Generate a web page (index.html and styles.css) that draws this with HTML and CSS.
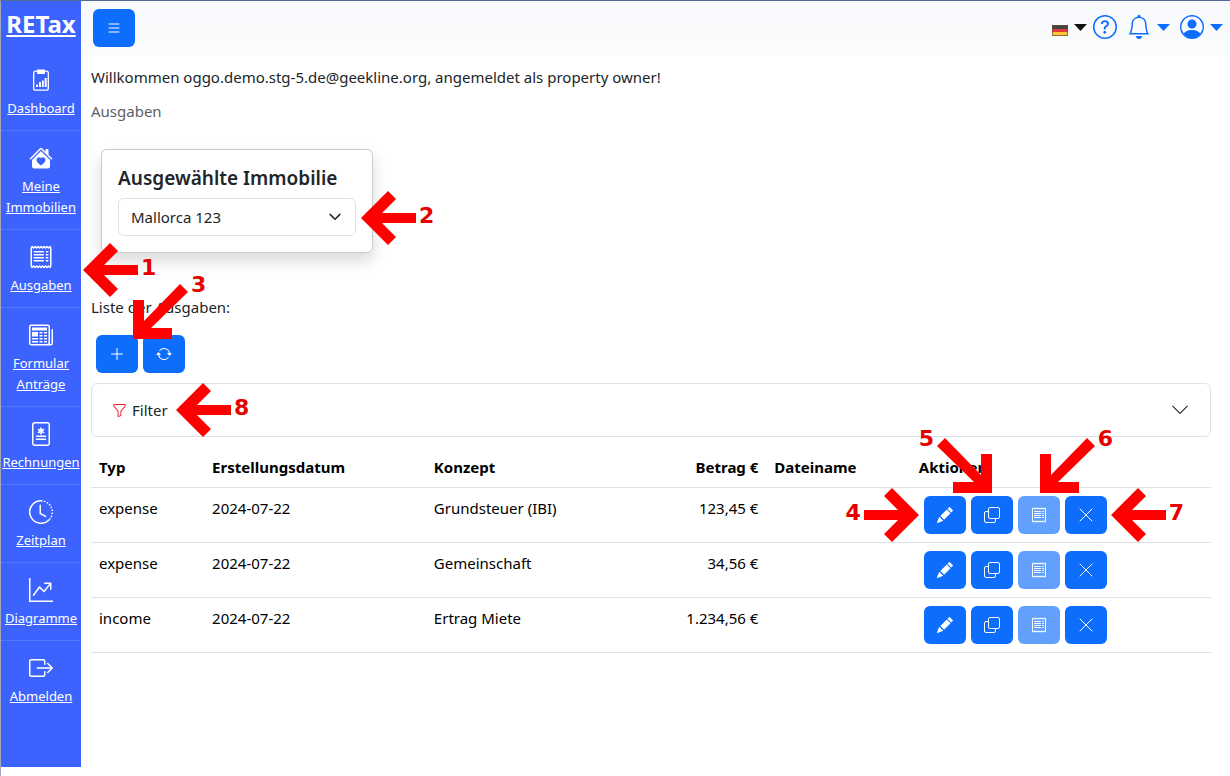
FILE: index.html
```html
<!DOCTYPE html>
<html lang="de">
<head>
<meta charset="utf-8">
<title>RETax – Ausgaben</title>
<meta name="viewport" content="width=device-width, initial-scale=1">
<link rel="stylesheet" href="styles.css">
</head>
<body>
<svg class="sprite" aria-hidden="true">
  <symbol id="i-list" viewBox="0 0 16 16"><path fill-rule="evenodd" d="M2.5 12a.5.5 0 0 1 .5-.5h10a.5.5 0 0 1 0 1H3a.5.5 0 0 1-.5-.5m0-4a.5.5 0 0 1 .5-.5h10a.5.5 0 0 1 0 1H3a.5.5 0 0 1-.5-.5m0-4a.5.5 0 0 1 .5-.5h10a.5.5 0 0 1 0 1H3a.5.5 0 0 1-.5-.5"/></symbol>
  <symbol id="i-clip" viewBox="0 0 24 24"><rect x="4.700" y="3.200" width="14.600" height="19" rx="2" fill="none" stroke="currentColor" stroke-width="1.300"/><path d="M9 1.500h6a1 1 0 0 1 1 1V5a1 1 0 0 1-1 1H9a1 1 0 0 1-1-1V2.500a1 1 0 0 1 1-1zM7 16.500h2V19H7zM10 14h2v5h-2zM13 12.500h1.800V19H13zM15.700 10h2v9h-2z"/></symbol>
  <symbol id="i-house" viewBox="0 0 16 16"><path d="M8.707 1.500a1 1 0 0 0-1.414 0L.646 8.146a.5.5 0 0 0 .708.708L8 2.207l6.646 6.647a.5.5 0 0 0 .708-.708L13 5.793V2.500a.5.5 0 0 0-.5-.5h-1a.5.5 0 0 0-.5.5v1.293z"/><path fill-rule="evenodd" d="m8 3.293 6 6V13.500a1.500 1.500 0 0 1-1.500 1.500h-9A1.500 1.500 0 0 1 2 13.500V9.293zM8 7.982C9.664 6.309 13.825 9.236 8 13 2.175 9.236 6.336 6.310 8 7.982"/></symbol>
  <symbol id="i-receipt" viewBox="0 0 16 16"><path d="M1.920.506a.5.5 0 0 1 .434.140L3 1.293l.646-.647a.5.5 0 0 1 .708 0L5 1.293l.646-.647a.5.5 0 0 1 .708 0L7 1.293l.646-.647a.5.5 0 0 1 .708 0L9 1.293l.646-.647a.5.5 0 0 1 .708 0l.646.647.646-.647a.5.5 0 0 1 .708 0l.646.647.646-.647a.5.5 0 0 1 .801.130l.5 1A.5.5 0 0 1 15 2v12a.5.5 0 0 1-.053.224l-.5 1a.5.5 0 0 1-.8.130L13 14.707l-.646.647a.5.5 0 0 1-.708 0L11 14.707l-.646.647a.5.5 0 0 1-.708 0L9 14.707l-.646.647a.5.5 0 0 1-.708 0L7 14.707l-.646.647a.5.5 0 0 1-.708 0L5 14.707l-.646.647a.5.5 0 0 1-.708 0L3 14.707l-.646.647a.5.5 0 0 1-.801-.130l-.5-1A.5.5 0 0 1 1 14V2a.5.5 0 0 1 .053-.224l.5-1a.5.5 0 0 1 .367-.270m.217 1.338L2 2.118v11.764l.137.274.509-.510a.5.5 0 0 1 .708 0l.646.647.646-.647a.5.5 0 0 1 .708 0l.646.647.646-.647a.5.5 0 0 1 .708 0l.646.647.646-.647a.5.5 0 0 1 .708 0l.646.647.646-.647a.5.5 0 0 1 .708 0l.646.647.646-.647a.5.5 0 0 1 .708 0l.509.509.137-.274V2.118l-.137-.274-.510.510a.5.5 0 0 1-.707 0L12 1.707l-.646.647a.5.5 0 0 1-.708 0L10 1.707l-.646.647a.5.5 0 0 1-.708 0L8 1.707l-.646.647a.5.5 0 0 1-.708 0L6 1.707l-.646.647a.5.5 0 0 1-.708 0L4 1.707l-.646.647a.5.5 0 0 1-.708 0z"/><path d="M3 4.500a.5.5 0 0 1 .5-.5h6a.5.5 0 1 1 0 1h-6a.5.5 0 0 1-.5-.5m0 2a.5.5 0 0 1 .5-.5h6a.5.5 0 1 1 0 1h-6a.5.5 0 0 1-.5-.5m0 2a.5.5 0 0 1 .5-.5h6a.5.5 0 1 1 0 1h-6a.5.5 0 0 1-.5-.5m0 2a.5.5 0 0 1 .5-.5h6a.5.5 0 0 1 0 1h-6a.5.5 0 0 1-.5-.5m8-6a.5.5 0 0 1 .5-.5h1a.5.5 0 0 1 0 1h-1a.5.5 0 0 1-.5-.5m0 2a.5.5 0 0 1 .5-.5h1a.5.5 0 0 1 0 1h-1a.5.5 0 0 1-.5-.5m0 2a.5.5 0 0 1 .5-.5h1a.5.5 0 0 1 0 1h-1a.5.5 0 0 1-.5-.5m0 2a.5.5 0 0 1 .5-.5h1a.5.5 0 0 1 0 1h-1a.5.5 0 0 1-.5-.5"/></symbol>
  <symbol id="i-news" viewBox="0 0 16 16"><path d="M0 2.500A1.500 1.500 0 0 1 1.500 1h11A1.500 1.500 0 0 1 14 2.500v10.528c0 .3-.05.654-.238.972h.738a.5.5 0 0 0 .5-.5v-9a.5.5 0 0 1 1 0v9a1.500 1.500 0 0 1-1.500 1.500H1.497A1.497 1.497 0 0 1 0 13.500zM12 14c.37 0 .654-.211.853-.441.092-.106.147-.279.147-.531V2.500a.5.5 0 0 0-.5-.5h-11a.5.5 0 0 0-.5.5v11c0 .278.223.5.497.5z"/><path d="M2 3h10v2H2zm0 3h4v3H2zm0 4h4v1H2zm0 2h4v1H2zm5-6h2v1H7zm3 0h2v1h-2zM7 8h2v1H7zm3 0h2v1h-2zm-3 2h2v1H7zm3 0h2v1h-2zm-3 2h2v1H7zm3 0h2v1h-2z"/></symbol>
  <symbol id="i-invoice" viewBox="0 0 16 16"><rect x="2.500" y=".5" width="11" height="15" rx="1.500" fill="none" stroke="currentColor"/><path d="M5 9.500h6M5 11.500h6M8 4v4M6.300 5l3.400 2M9.700 5 6.300 7" fill="none" stroke="currentColor" stroke-linecap="round"/></symbol>
  <symbol id="i-clock" viewBox="0 0 16 16"><path d="M8 .5a7.500 7.500 0 1 0 5.300 12.800M7.500 3.500V9l3.500 1.900" fill="none" stroke="currentColor" stroke-linecap="round"/><path d="M8 .5a7.500 7.500 0 0 1 5.300 12.800" fill="none" stroke="currentColor" stroke-dasharray="1 1"/></symbol>
  <symbol id="i-graph" viewBox="0 0 16 16"><path fill-rule="evenodd" d="M0 0h1v15h15v1H0zm10 3.500a.5.5 0 0 1 .5-.5h4a.5.5 0 0 1 .5.5v4a.5.5 0 0 1-1 0V4.900l-3.613 4.417a.5.5 0 0 1-.740.037L7.060 6.767l-3.656 5.027a.5.5 0 0 1-.808-.588l4-5.500a.5.5 0 0 1 .758-.060l2.609 2.610L13.445 4H10.500a.5.5 0 0 1-.5-.5"/></symbol>
  <symbol id="i-out" viewBox="0 0 16 16"><path fill-rule="evenodd" d="M10 12.500a.5.5 0 0 1-.5.5h-8a.5.5 0 0 1-.5-.5v-9a.5.5 0 0 1 .5-.5h8a.5.5 0 0 1 .5.5v2a.5.5 0 0 0 1 0v-2A1.500 1.500 0 0 0 9.500 2h-8A1.500 1.500 0 0 0 0 3.500v9A1.500 1.500 0 0 0 1.500 14h8a1.500 1.500 0 0 0 1.500-1.500v-2a.5.5 0 0 0-1 0z"/><path fill-rule="evenodd" d="M15.854 8.354a.5.5 0 0 0 0-.708l-3-3a.5.5 0 0 0-.708.708L14.293 7.500H5.500a.5.5 0 0 0 0 1h8.793l-2.147 2.146a.5.5 0 0 0 .708.708z"/></symbol>
  <symbol id="i-help" viewBox="0 0 16 16"><path d="M8 15A7 7 0 1 1 8 1a7 7 0 0 1 0 14m0 1A8 8 0 1 0 8 0a8 8 0 0 0 0 16"/><path d="M5.255 5.786a.237.237 0 0 0 .241.247h.825c.138 0 .248-.113.266-.250.090-.656.540-1.134 1.342-1.134.686 0 1.314.343 1.314 1.168 0 .635-.374.927-.965 1.371-.673.489-1.206 1.060-1.168 1.987l.003.217a.25.25 0 0 0 .250.246h.811a.25.25 0 0 0 .250-.250v-.105c0-.718.273-.927 1.010-1.486.609-.463 1.244-.977 1.244-2.056 0-1.511-1.276-2.241-2.673-2.241-1.267 0-2.655.590-2.750 2.286m1.557 5.763c0 .533.425.927 1.010.927.609 0 1.028-.394 1.028-.927 0-.552-.420-.940-1.029-.940-.584 0-1.009.388-1.009.940"/></symbol>
  <symbol id="i-bell" viewBox="0 0 16 16"><path d="M8 16a2 2 0 0 0 2-2H6a2 2 0 0 0 2 2M8 1.918l-.797.161A4 4 0 0 0 4 6c0 .628-.134 2.197-.459 3.742-.160.767-.376 1.566-.663 2.258h10.244c-.287-.692-.502-1.490-.663-2.258C12.134 8.197 12 6.628 12 6a4 4 0 0 0-3.203-3.920zM14.220 12c.223.447.481.801.780 1H1c.299-.199.557-.553.780-1C2.680 10.200 3 6.880 3 6c0-2.420 1.720-4.440 4.005-4.901a1 1 0 1 1 1.990 0A5 5 0 0 1 13 6c0 .880.320 4.200 1.220 6"/></symbol>
  <symbol id="i-user" viewBox="0 0 16 16"><path d="M11 6a3 3 0 1 1-6 0 3 3 0 0 1 6 0"/><path fill-rule="evenodd" d="M0 8a8 8 0 1 1 16 0A8 8 0 0 1 0 8m8-7a7 7 0 0 0-5.468 11.370C3.242 11.226 4.805 10 8 10s4.757 1.225 5.468 2.370A7 7 0 0 0 8 1"/></symbol>
  <symbol id="i-caret" viewBox="0 0 13 7"><path d="M0 0h13L6.500 7z"/></symbol>
  <symbol id="i-plus" viewBox="0 0 16 16"><path d="M8 2a.5.5 0 0 1 .5.5v5h5a.5.5 0 0 1 0 1h-5v5a.5.5 0 0 1-1 0v-5h-5a.5.5 0 0 1 0-1h5v-5A.5.5 0 0 1 8 2"/></symbol>
  <symbol id="i-repeat" viewBox="0 0 16 16"><path d="M11.534 7h3.932a.25.25 0 0 1 .192.410l-1.966 2.360a.25.25 0 0 1-.384 0l-1.966-2.360a.25.25 0 0 1 .192-.410m-11 2h3.932a.25.25 0 0 0 .192-.410L2.692 6.230a.25.25 0 0 0-.384 0L.342 8.590A.25.25 0 0 0 .534 9"/><path fill-rule="evenodd" d="M8 3c-1.552 0-2.940.707-3.857 1.818a.5.5 0 1 1-.771-.636A6.002 6.002 0 0 1 13.917 7H12.900A5 5 0 0 0 8 3M3.100 9a5.002 5.002 0 0 0 8.757 2.182.5.5 0 1 1 .771.636A6.002 6.002 0 0 1 2.083 9z"/></symbol>
  <symbol id="i-funnel" viewBox="0 0 16 16"><path d="M1.500 1.500A.5.5 0 0 1 2 1h12a.5.5 0 0 1 .5.5v2a.5.5 0 0 1-.128.334L10 8.692V13.500a.5.5 0 0 1-.342.474l-3 1A.5.5 0 0 1 6 14.500V8.692L1.628 3.834A.5.5 0 0 1 1.500 3.500zm1 .5v1.308l4.372 4.858A.5.5 0 0 1 7 8.500v5.306l2-.666V8.500a.5.5 0 0 1 .128-.334L13.500 3.308V2z"/></symbol>
  <symbol id="i-chevron" viewBox="0 0 16 16"><path fill="none" stroke="currentColor" stroke-linecap="round" stroke-linejoin="round" d="m1.500 4.500 6.500 6.500 6.500-6.500"/></symbol>
  <symbol id="i-pencil" viewBox="0 0 16 16"><path d="M12.854.146a.5.5 0 0 0-.707 0L10.500 1.793 14.207 5.500l1.647-1.646a.5.5 0 0 0 0-.708zm.646 6.061L9.793 2.500 3.293 9H3.500a.5.5 0 0 1 .5.5v.5h.5a.5.5 0 0 1 .5.5v.5h.5a.5.5 0 0 1 .5.5v.5h.5a.5.5 0 0 1 .5.5v.207zm-7.468 7.468A.5.5 0 0 1 6 13.500V13h-.5a.5.5 0 0 1-.5-.5V12h-.5a.5.5 0 0 1-.5-.5V11h-.5a.5.5 0 0 1-.5-.5V10h-.5a.5.5 0 0 1-.175-.032l-.179.178a.5.5 0 0 0-.110.168l-2 5a.5.5 0 0 0 .650.650l5-2a.5.5 0 0 0 .168-.110z"/></symbol>
  <symbol id="i-copy" viewBox="0 0 16 16"><path fill="none" stroke="currentColor" d="M6 .5h8A1.500 1.500 0 0 1 15.500 2v8a1.500 1.500 0 0 1-1.500 1.500H6A1.500 1.500 0 0 1 4.500 10V2A1.500 1.500 0 0 1 6 .5zM4.500 4.500H2A1.500 1.500 0 0 0 .5 6v8A1.500 1.500 0 0 0 2 15.500h8a1.500 1.500 0 0 0 1.500-1.500v-2.500"/></symbol>
  <symbol id="i-x" viewBox="0 0 16 16"><path fill="none" stroke="currentColor" stroke-linecap="round" d="m2 2 12 12m0-12-12 12"/></symbol>
  <symbol id="i-arrow" viewBox="0 0 55 54"><path d="M0 27 27 0l8 8-14 14h34v10H21l14 14-8 8z"/></symbol>
  <symbol id="i-diag" viewBox="0 0 55 55"><path d="M0 55V16h11v21L47 0l8 8-37 36h21v11z"/></symbol>
</svg>

<div class="app">
  <nav class="sidebar" aria-label="Hauptmenü">
    <a class="brand" href="#">RETax</a>
    <ul class="menu">
      <li><a href="#"><svg class="ico24"><use href="#i-clip"/></svg><span>Dashboard</span></a></li>
      <li><a href="#"><svg class="ico24"><use href="#i-house"/></svg><span>Meine Immobilien</span></a></li>
      <li class="anchor"><a href="#"><svg class="ico24"><use href="#i-receipt"/></svg><span>Ausgaben</span></a>
        <span class="mark m1"><svg class="arrow"><use href="#i-arrow"/></svg><b>1</b></span></li>
      <li><a href="#"><svg class="ico24"><use href="#i-news"/></svg><span>Formular Anträge</span></a></li>
      <li><a href="#"><svg class="ico24"><use href="#i-invoice"/></svg><span>Rechnungen</span></a></li>
      <li><a href="#"><svg class="ico24"><use href="#i-clock"/></svg><span>Zeitplan</span></a></li>
      <li><a href="#"><svg class="ico24"><use href="#i-graph"/></svg><span>Diagramme</span></a></li>
      <li><a href="#"><svg class="ico24"><use href="#i-out"/></svg><span>Abmelden</span></a></li>
    </ul>
  </nav>

  <div class="page">
    <header class="topbar">
      <button class="btn" aria-label="Menü"><svg class="ico16"><use href="#i-list"/></svg></button>
      <div class="tools">
        <div class="tool-group">
          <button class="tool dark" aria-label="Sprache">
            <svg class="flag" viewBox="0 0 16 11"><path fill="#444" d="M0 0h16v4H0z"/><path fill="#e03a3a" d="M0 4h16v3H0z"/><path fill="#fcc63d" d="M0 7h16v4H0z"/><path fill="none" stroke="#6b4a2a" stroke-opacity=".7" d="M.5.5h15v10H.5z"/></svg>
            <svg class="caret"><use href="#i-caret"/></svg>
          </button>
          <button class="tool" aria-label="Hilfe"><svg class="ico24"><use href="#i-help"/></svg></button>
        </div>
        <button class="tool" aria-label="Benachrichtigungen"><svg class="ico24"><use href="#i-bell"/></svg><svg class="caret"><use href="#i-caret"/></svg></button>
        <button class="tool" aria-label="Konto"><svg class="ico24"><use href="#i-user"/></svg><svg class="caret"><use href="#i-caret"/></svg></button>
      </div>
    </header>

    <main class="content">
      <p class="welcome">Willkommen oggo.demo.stg-5.de@geekline.org, angemeldet als property owner!</p>
      <p class="crumb">Ausgaben</p>

      <section class="card">
        <label class="card-title" for="property">Ausgewählte Immobilie</label>
        <div class="select anchor">
          <select id="property"><option>Mallorca 123</option></select>
          <svg class="select-icon"><use href="#i-chevron"/></svg>
          <span class="mark m2"><svg class="arrow"><use href="#i-arrow"/></svg><b>2</b></span>
        </div>
      </section>

      <p class="list-title">Liste der Ausgaben:</p>
      <div class="actions">
        <span class="anchor"><button class="btn" aria-label="Neu"><svg class="ico16"><use href="#i-plus"/></svg></button>
          <span class="mark m3"><svg class="diag"><use href="#i-diag"/></svg><b>3</b></span></span>
        <button class="btn" aria-label="Aktualisieren"><svg class="ico16"><use href="#i-repeat"/></svg></button>
      </div>

      <button class="filter anchor">
        <svg class="funnel"><use href="#i-funnel"/></svg><span>Filter</span>
        <svg class="filter-icon"><use href="#i-chevron"/></svg>
        <span class="mark m8"><svg class="arrow"><use href="#i-arrow"/></svg><b>8</b></span>
      </button>

      <table class="list">
        <colgroup><col class="c-type"><col class="c-date"><col class="c-concept"><col class="c-amount"><col class="c-file"><col></colgroup>
        <thead>
          <tr><th>Typ</th><th>Erstellungsdatum</th><th>Konzept</th><th class="num">Betrag €</th><th>Dateiname</th><th>Aktionen</th></tr>
        </thead>
        <tbody>
          <tr><td>expense</td><td>2024-07-22</td><td>Grundsteuer (IBI)</td><td class="num">123,45 €</td><td></td><td>
            <div class="actions anchor">
              <button class="btn" aria-label="Bearbeiten"><svg class="ico16"><use href="#i-pencil"/></svg></button>
              <button class="btn" aria-label="Kopieren"><svg class="ico16"><use href="#i-copy"/></svg></button>
              <button class="btn" disabled aria-label="Beleg"><svg class="ico16"><use href="#i-receipt"/></svg></button>
              <button class="btn" aria-label="Löschen"><svg class="ico16"><use href="#i-x"/></svg></button>
              <span class="mark m4"><b>4</b><svg class="arrow flip"><use href="#i-arrow"/></svg></span>
              <span class="mark m5"><b>5</b><svg class="diag flip"><use href="#i-diag"/></svg></span>
              <span class="mark m6"><svg class="diag"><use href="#i-diag"/></svg><b>6</b></span>
              <span class="mark m7"><svg class="arrow"><use href="#i-arrow"/></svg><b>7</b></span>
            </div></td></tr>
          <tr><td>expense</td><td>2024-07-22</td><td>Gemeinschaft</td><td class="num">34,56 €</td><td></td><td>
            <div class="actions">
              <button class="btn" aria-label="Bearbeiten"><svg class="ico16"><use href="#i-pencil"/></svg></button>
              <button class="btn" aria-label="Kopieren"><svg class="ico16"><use href="#i-copy"/></svg></button>
              <button class="btn" disabled aria-label="Beleg"><svg class="ico16"><use href="#i-receipt"/></svg></button>
              <button class="btn" aria-label="Löschen"><svg class="ico16"><use href="#i-x"/></svg></button>
            </div></td></tr>
          <tr><td>income</td><td>2024-07-22</td><td>Ertrag Miete</td><td class="num">1.234,56 €</td><td></td><td>
            <div class="actions">
              <button class="btn" aria-label="Bearbeiten"><svg class="ico16"><use href="#i-pencil"/></svg></button>
              <button class="btn" aria-label="Kopieren"><svg class="ico16"><use href="#i-copy"/></svg></button>
              <button class="btn" disabled aria-label="Beleg"><svg class="ico16"><use href="#i-receipt"/></svg></button>
              <button class="btn" aria-label="Löschen"><svg class="ico16"><use href="#i-x"/></svg></button>
            </div></td></tr>
        </tbody>
      </table>
    </main>
  </div>
</div>
</body>
</html>
```
FILE: styles.css
```css
* { box-sizing: border-box; }

body {
  margin: 0;
  background: #fff;
  color: #212529;
  font: 15px/24px "Noto Sans", sans-serif;
}

button, select { font: inherit; color: inherit; }
p { margin: 0; }
svg { display: block; flex: none; fill: currentColor; }

.sprite { position: absolute; width: 0; height: 0; }
.ico24 { width: 24px; height: 24px; }
.ico16 { width: 16px; height: 16px; }

.app {
  display: flex;
  min-height: 100vh;
  border-top: 1px solid #4f6d94;
  border-left: 1px solid #a3a6bd;
}

/* Sidebar */
.sidebar {
  flex: none;
  width: 80px;
  margin-bottom: 9px;
  background: #3d63ff;
  color: #fff;
}
.sidebar a { color: inherit; }
.brand {
  display: block;
  padding: 7px 0 13px;
  font-size: 24px;
  font-weight: 700;
  line-height: 32px;
  text-align: center;
}
.menu { margin: 0; padding: 0; list-style: none; }
.menu li + li { border-top: 1px solid #5577ff; }
.menu a {
  display: flex;
  flex-direction: column;
  align-items: center;
  gap: 6px;
  padding: 15px 0 11px;
  font-size: 13px;
  line-height: 21px;
  text-align: center;
}

/* Top bar */
.page { flex: 1; min-width: 0; }
.topbar {
  display: flex;
  justify-content: space-between;
  align-items: flex-start;
  padding: 8px 7px 9px 12px;
  background: linear-gradient(#f8f9fc, #fbfcfd);
}
.tools { display: flex; align-items: center; gap: 10px; padding-top: 6px; }
.tool-group { display: flex; align-items: center; gap: 6px; }
.tool {
  display: flex;
  align-items: center;
  gap: 6px;
  padding: 0;
  border: 0;
  background: none;
  color: #0d6efd;
}
.tool.dark { color: #111; }
.flag { width: 16px; height: 11px; margin-top: 6px; }
.caret { width: 13px; height: 7px; }

.btn {
  display: flex;
  align-items: center;
  justify-content: center;
  width: 42px;
  height: 38px;
  padding: 0;
  border: 0;
  border-radius: 6px;
  background: #0d6efd;
  color: #fff;
}
.btn:disabled { opacity: .65; }

/* Content */
.content { padding: 9px 19px 24px 10px; }
.crumb { margin-top: 10px; color: #5c6166; }

.card {
  width: 272px;
  margin: 26px 10px 42px;
  padding: 16px;
  border: 1px solid #c9cbcd;
  border-radius: 6px;
  background: #fff;
  box-shadow: 0 8px 16px rgba(0, 0, 0, .15);
}
.card-title {
  display: block;
  margin-bottom: 8px;
  font-size: 19px;
  font-weight: 600;
}
.select select {
  display: block;
  width: 100%;
  height: 38px;
  padding: 0 36px 0 12px;
  border: 1px solid #dee2e6;
  border-radius: 6px;
  background: #fff;
  appearance: none;
}
.select-icon {
  position: absolute;
  top: 13px;
  right: 15px;
  width: 12px;
  height: 12px;
  stroke-width: 2px;
  pointer-events: none;
}

.actions { display: flex; gap: 5px; padding-left: 5px; }
.list-title + .actions { margin: 16px 0 10px; }

.filter {
  display: flex;
  align-items: center;
  gap: 5px;
  width: 100%;
  margin-bottom: 10px;
  padding: 14px 21px 14px 20px;
  border: 1px solid #dee2e6;
  border-radius: 6px;
  background: #fff;
}
.funnel { width: 15px; height: 15px; color: #e8192c; }
.filter-icon { width: 18px; height: 18px; margin-left: auto; }

.list {
  width: 100%;
  border-collapse: collapse;
  table-layout: fixed;
  color: #000;
}
.list th, .list td {
  padding: 8px;
  border-bottom: 1px solid #dee2e6;
  text-align: left;
  vertical-align: top;
}
.list .num { text-align: right; }
.c-type { width: 10.1%; }
.c-date { width: 19.8%; }
.c-concept { width: 17%; }
.c-amount { width: 13.4%; }
.c-file { width: 12.9%; }

/* Numbered pointers over the controls they explain */
.anchor { position: relative; }
.mark {
  position: absolute;
  z-index: 1;
  display: flex;
  align-items: center;
  gap: 3px;
  color: #f00;
  pointer-events: none;
}
.mark b {
  margin-bottom: 4px;
  color: #e60000;
  font: 700 22px/24px "DejaVu Sans", sans-serif;
}
.arrow { width: 55px; height: 54px; }
.diag { width: 55px; height: 55px; }
.flip { transform: scaleX(-1); }
.m1 { top: 13px; left: 82px; }
.m2 { top: -7px; left: 243px; }
.m3, .m5, .m6 { align-items: flex-start; }
.m3 { top: -51px; left: 37px; }
.m4 { top: -8px; right: 100%; }
.m5 { top: -58px; left: 0; }
.m6 { top: -58px; left: 121px; }
.m7 { top: -8px; left: 192px; }
.m8 { top: -1px; left: 84px; }
.m3 b, .m5 b, .m6 b { margin-top: -11px; }
```
